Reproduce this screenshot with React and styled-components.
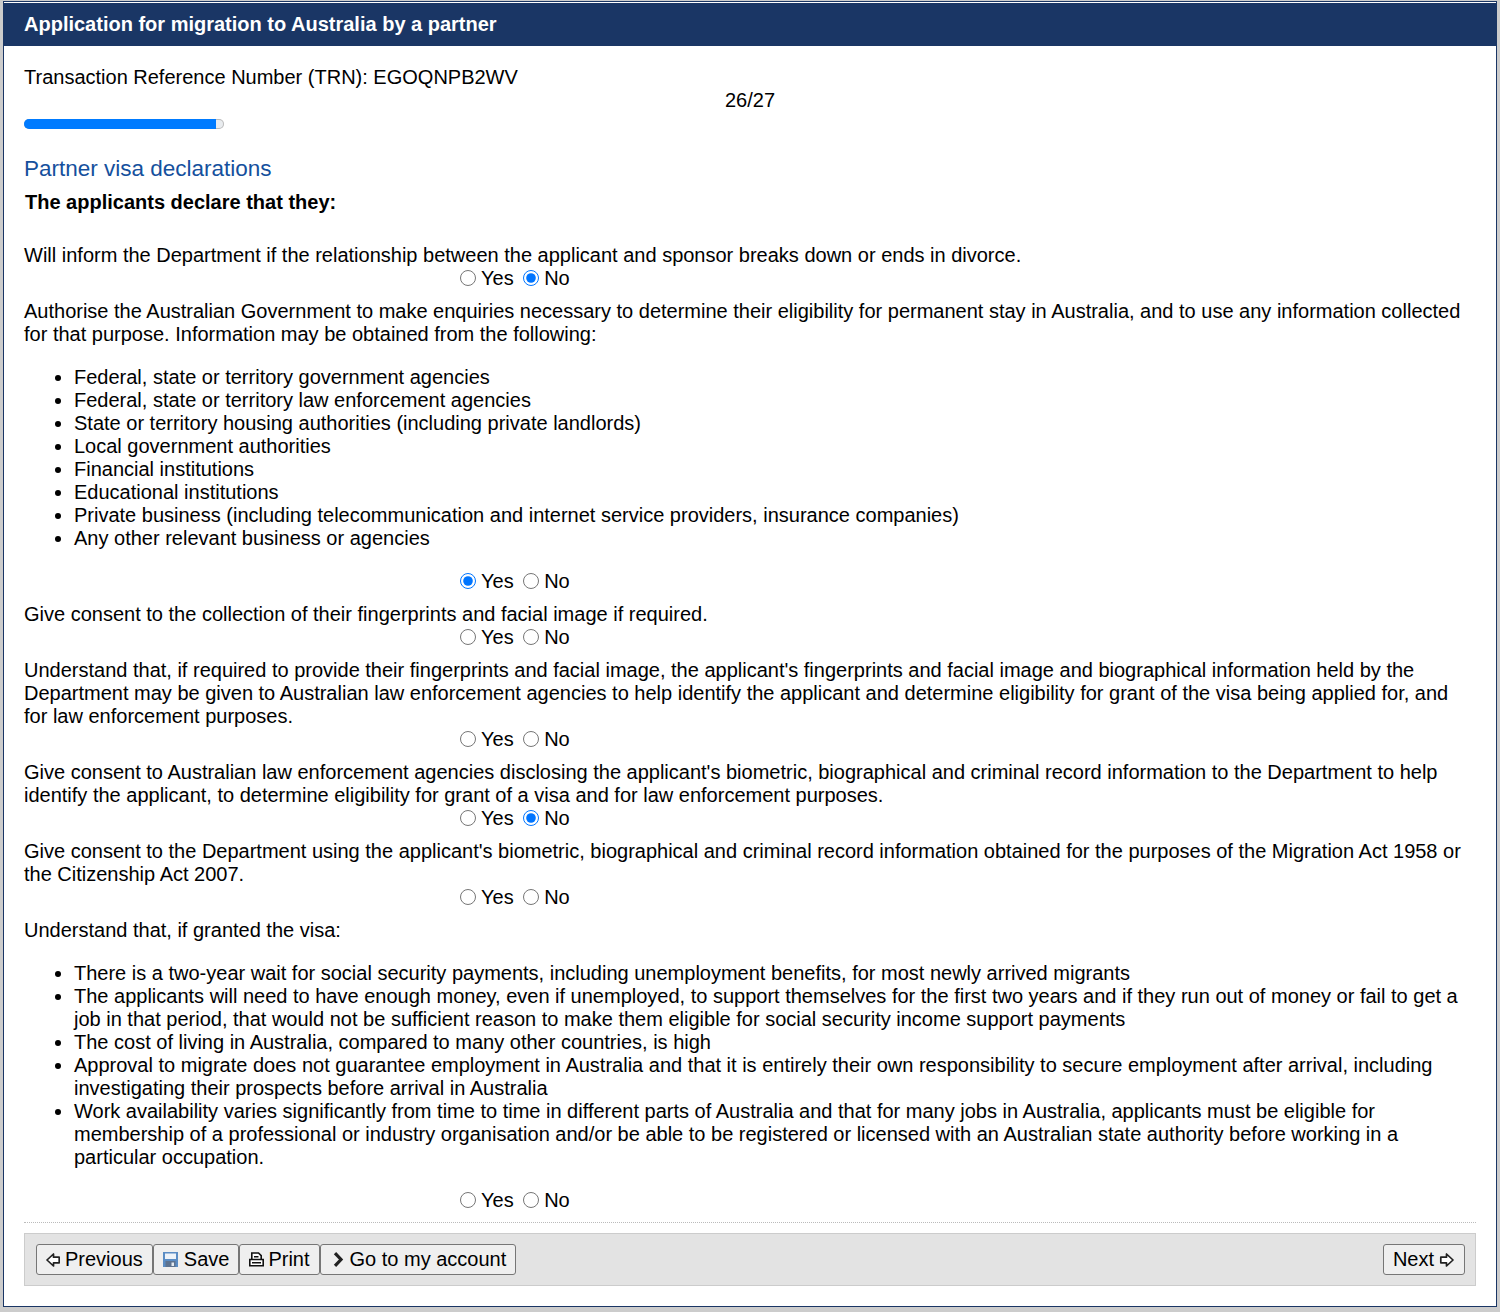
import styled, { createGlobalStyle } from "styled-components";

const GlobalStyle = createGlobalStyle`
    html, body {
        margin: 0;
        padding: 0;
        background: #cccccc;
    }
    body {
        padding: 1px 3px 0;
        font-family: "Liberation Sans", Arial, sans-serif;
        font-size: 20px;
        line-height: 23px;
        color: #000;
    }
`

const Question = ({ text, children, value, name }) => (
    <>
        {text && <div>{text}</div>}
        {children}
        <Answer>
            <Choice><Radio type="radio" name={name} defaultChecked={value === "yes"} />Yes</Choice>
            <Choice><Radio type="radio" name={name} defaultChecked={value === "no"} />No</Choice>
        </Answer>
    </>
)

const ArrowLeft = () => (
    <svg width="14" height="14" viewBox="0 0 14 14">
        <path d="M1 7 L7.5 1 V4.2 H13.2 V9.8 H7.5 V13 Z" fill="#fff" stroke="#222" strokeWidth="1.7" strokeLinejoin="round" />
    </svg>
)

const ArrowRight = () => (
    <svg width="16" height="14" viewBox="0 0 16 14">
        <path d="M14 7 L7.5 1 V4.2 H1.8 V9.8 H7.5 V13 Z" fill="#fff" stroke="#222" strokeWidth="1.7" strokeLinejoin="round" />
    </svg>
)

const SaveIcon = () => (
    <svg width="16" height="15" viewBox="0 0 16 15">
        <path d="M0 0 H15 V15 H0 Z" fill="#5a8cc4" />
        <path d="M2 1.5 H13 V7 H2 Z" fill="#eef3f9" />
        <path d="M2.5 9 H12.5 V15 H2.5 Z" fill="#5d7390" />
        <path d="M8.5 10.5 H11 V14 H8.5 Z" fill="#e4eaf1" />
    </svg>
)

const PrintIcon = () => (
    <svg width="14" height="15" viewBox="0 0 14 15" overflow="visible">
        <path d="M2.8 1 H9.5 L12.2 3.7 V8 H2.8 Z" fill="#fff" stroke="#111" strokeWidth="1.6" />
        <path d="M0.8 7.5 H14.2 V13.8 H0.8 Z" fill="#fff" stroke="#111" strokeWidth="1.6" />
        <path d="M5 4.8 H9.5 M3 10.8 H12" stroke="#111" strokeWidth="1.5" />
    </svg>
)

const ChevronIcon = () => (
    <svg width="15" height="15" viewBox="0 0 15 15">
        <path d="M5 1.2 L11 7.5 L5 13.8" fill="none" stroke="#222" strokeWidth="3.2" />
    </svg>
)

const App = () => {
    return (
        <Page>
            <GlobalStyle />
            <Header>Application for migration to Australia by a partner</Header>
            <Content>
                <div>Transaction Reference Number (TRN): EGOQNPB2WV</div>
                <Counter>26/27</Counter>
                <Progress><ProgressFill style={{ width: "96%" }} /></Progress>
                <Title>Partner visa declarations</Title>
                <Lead>The applicants declare that they:</Lead>

                <Question name="q1" value="no" text="Will inform the Department if the relationship between the applicant and sponsor breaks down or ends in divorce." />

                <Question name="q2" value="yes" text="Authorise the Australian Government to make enquiries necessary to determine their eligibility for permanent stay in Australia, and to use any information collected for that purpose. Information may be obtained from the following:">
                    <List>
                        <li>Federal, state or territory government agencies</li>
                        <li>Federal, state or territory law enforcement agencies</li>
                        <li>State or territory housing authorities (including private landlords)</li>
                        <li>Local government authorities</li>
                        <li>Financial institutions</li>
                        <li>Educational institutions</li>
                        <li>Private business (including telecommunication and internet service providers, insurance companies)</li>
                        <li>Any other relevant business or agencies</li>
                    </List>
                </Question>

                <Question name="q3" text="Give consent to the collection of their fingerprints and facial image if required." />

                <Question name="q4" text="Understand that, if required to provide their fingerprints and facial image, the applicant's fingerprints and facial image and biographical information held by the Department may be given to Australian law enforcement agencies to help identify the applicant and determine eligibility for grant of the visa being applied for, and for law enforcement purposes." />

                <Question name="q5" value="no" text="Give consent to Australian law enforcement agencies disclosing the applicant's biometric, biographical and criminal record information to the Department to help identify the applicant, to determine eligibility for grant of a visa and for law enforcement purposes." />

                <Question name="q6" text="Give consent to the Department using the applicant's biometric, biographical and criminal record information obtained for the purposes of the Migration Act 1958 or the Citizenship Act 2007." />

                <Question name="q7" text="Understand that, if granted the visa:">
                    <List>
                        <li>There is a two-year wait for social security payments, including unemployment benefits, for most newly arrived migrants</li>
                        <li>The applicants will need to have enough money, even if unemployed, to support themselves for the first two years and if they run out of money or fail to get a job in that period, that would not be sufficient reason to make them eligible for social security income support payments</li>
                        <li>The cost of living in Australia, compared to many other countries, is high</li>
                        <li>Approval to migrate does not guarantee employment in Australia and that it is entirely their own responsibility to secure employment after arrival, including investigating their prospects before arrival in Australia</li>
                        <li>Work availability varies significantly from time to time in different parts of Australia and that for many jobs in Australia, applicants must be eligible for membership of a professional or industry organisation and/or be able to be registered or licensed with an Australian state authority before working in a particular occupation.</li>
                    </List>
                </Question>

                <Divider />
                <Toolbar>
                    <ButtonGroup>
                        <Button><ArrowLeft />Previous</Button>
                        <Button><SaveIcon />Save</Button>
                        <Button><PrintIcon />Print</Button>
                        <Button><ChevronIcon />Go to my account</Button>
                    </ButtonGroup>
                    <Button>Next<ArrowRight /></Button>
                </Toolbar>
            </Content>
        </Page>
    )
}

export default App

const Page = styled.div`
    width: 1494px;
    height: 1306px;
    box-sizing: border-box;
    background: #fff;
    border: 1px solid #1a3665;
`
const Header = styled.div`
    height: 43px;
    margin-top: 1px;
    padding-left: 20px;
    background: #1a3665;
    color: #fff;
    font-weight: bold;
    line-height: 42px;
`
const Content = styled.div`
    padding: 20px 20px 0;
`
const Counter = styled.div`
    text-align: center;
    height: 23px;
`
const Progress = styled.div`
    width: 200px;
    height: 10px;
    margin-top: 7px;
    background: #e9ecef;
    box-shadow: inset 0 0 0 1px #bbb;
    border-radius: 5px;
    overflow: hidden;
`
const ProgressFill = styled.div`
    height: 100%;
    background: #007bff;
`
const Title = styled.h2`
    margin: 26px 0 0;
    font-size: 22.5px;
    line-height: 27px;
    font-weight: normal;
    color: #15509d;
`
const Lead = styled.div`
    margin: 9px 0 30px 1px;
    font-weight: bold;
`
const List = styled.ul`
    margin: 20px 0;
    padding-left: 50px;
`
const Answer = styled.div`
    display: flex;
    gap: 9.5px;
    height: 23px;
    margin-left: 436px;
    margin-bottom: 10px;
`
const Choice = styled.label`
    display: flex;
    align-items: center;
`
const Radio = styled.input`
    width: 16px;
    height: 16px;
    margin: -2px 5px 0 0;
`
const Divider = styled.div`
    border-top: 1px dotted #bbb;
`
const Toolbar = styled.div`
    display: flex;
    justify-content: space-between;
    align-items: center;
    box-sizing: border-box;
    height: 53px;
    margin-top: 10px;
    padding: 0 10px 0 11px;
    background: #e3e3e3;
    border: 1px solid #ccc;
`
const ButtonGroup = styled.div`
    display: flex;
`
const Button = styled.button`
    display: flex;
    align-items: center;
    gap: 5px;
    height: 31px;
    padding: 0 9px;
    background: #efefef;
    border: 1px solid #767676;
    border-radius: 3px;
    font: inherit;
    color: #000;
`
